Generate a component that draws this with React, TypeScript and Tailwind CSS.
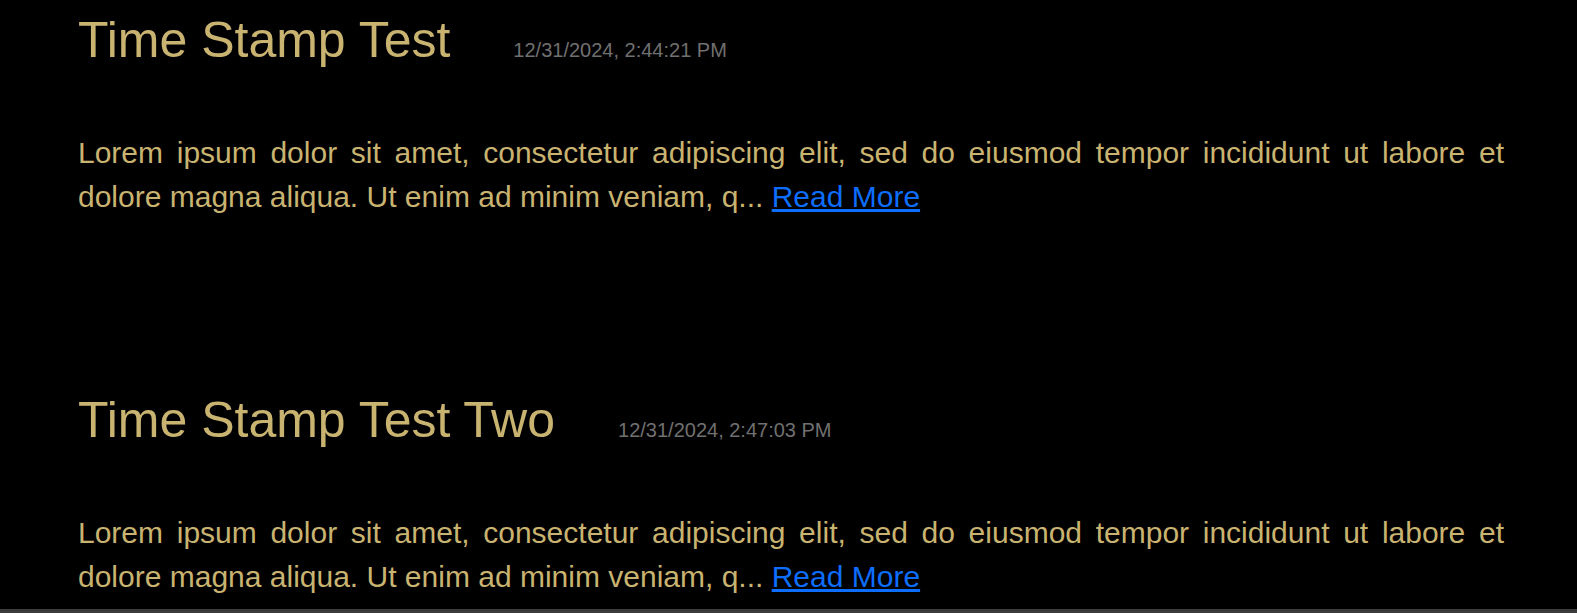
const POSTS = [
  {
    title: "Time Stamp Test",
    stamp: "12/31/2024, 2:44:21 PM",
    excerpt:
      "Lorem ipsum dolor sit amet, consectetur adipiscing elit, sed do eiusmod tempor incididunt ut labore et dolore magna aliqua. Ut enim ad minim veniam, q...",
  },
  {
    title: "Time Stamp Test Two",
    stamp: "12/31/2024, 2:47:03 PM",
    excerpt:
      "Lorem ipsum dolor sit amet, consectetur adipiscing elit, sed do eiusmod tempor incididunt ut labore et dolore magna aliqua. Ut enim ad minim veniam, q...",
  },
];

export default function App() {
  return (
    <div className="min-h-screen bg-black font-['Liberation_Sans',Arial,sans-serif]">
      <main className="flex flex-col gap-[161px] pl-[78px] pr-[73px]">
        {POSTS.map((post) => (
          <article key={post.title} className="pt-[12px]">
            <div className="flex items-baseline">
              <h2 className="text-[50px] leading-[56px] font-normal text-[#c9b370]">{post.title}</h2>
              <span className="ml-[63px] text-[20px] text-[#707070]">{post.stamp}</span>
            </div>
            <p className="mt-[63px] text-justify text-[30px] leading-[44px] text-[#c9b370]">
              {post.excerpt}{" "}
              <a href="#" className="text-[#0d6efd] underline">
                Read More
              </a>
            </p>
          </article>
        ))}
      </main>
      <footer className="mt-[10px] h-[120px] bg-[#3a3a3a]" />
    </div>
  );
}
